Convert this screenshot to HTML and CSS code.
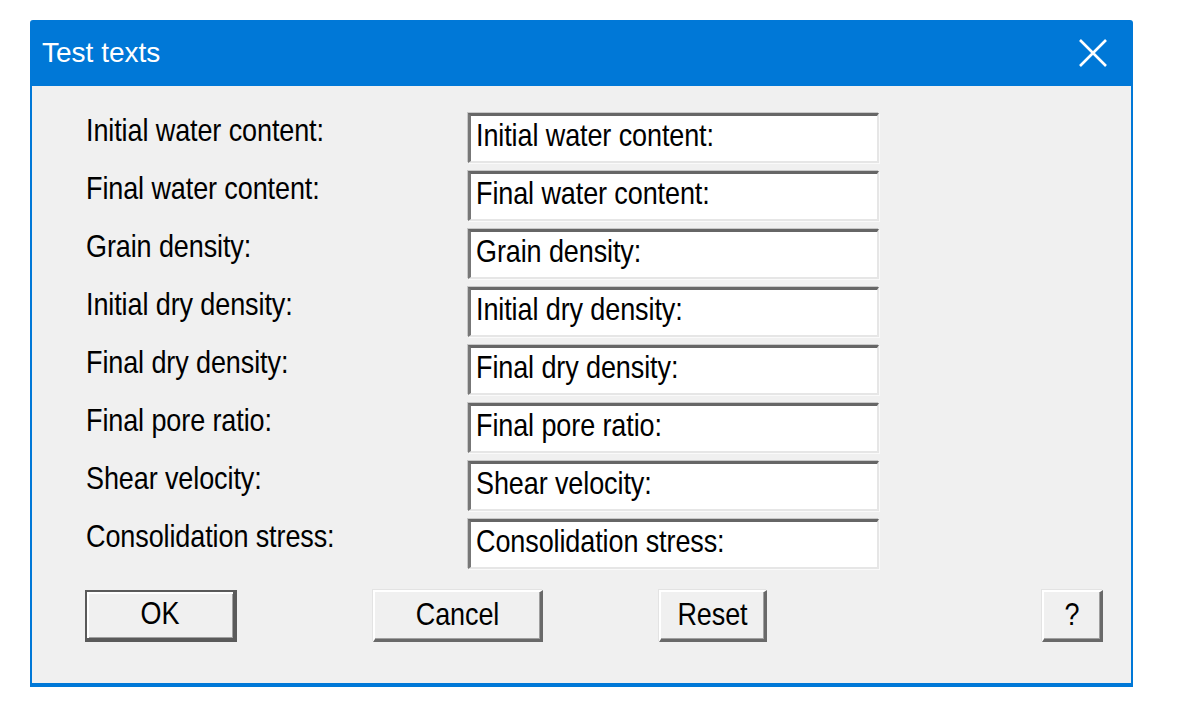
FILE: index.html
```html
<!DOCTYPE html>
<html>
<head>
<meta charset="utf-8">
<title>Test texts</title>
<link rel="stylesheet" href="styles.css">
</head>
<body>
<div class="window">
  <div class="titlebar">
    <span class="title">Test texts</span>
    <svg class="close" width="28" height="28" viewBox="0 0 28 28"><path d="M1 1 L27 27 M27 1 L1 27" stroke="#fff" stroke-width="2.6" fill="none"/></svg>
  </div>
  <div class="client">
    <div class="form">
      <div class="label"><span class="txt">Initial water content:</span></div><div class="field"><span class="txt">Initial water content:</span></div>
      <div class="label"><span class="txt">Final water content:</span></div><div class="field"><span class="txt">Final water content:</span></div>
      <div class="label"><span class="txt">Grain density:</span></div><div class="field"><span class="txt">Grain density:</span></div>
      <div class="label"><span class="txt">Initial dry density:</span></div><div class="field"><span class="txt">Initial dry density:</span></div>
      <div class="label"><span class="txt">Final dry density:</span></div><div class="field"><span class="txt">Final dry density:</span></div>
      <div class="label"><span class="txt">Final pore ratio:</span></div><div class="field"><span class="txt">Final pore ratio:</span></div>
      <div class="label"><span class="txt">Shear velocity:</span></div><div class="field"><span class="txt">Shear velocity:</span></div>
      <div class="label"><span class="txt">Consolidation stress:</span></div><div class="field"><span class="txt">Consolidation stress:</span></div>
    </div>
    <div class="buttons">
      <div class="btn btn-default btn-ok"><span class="txt">OK</span></div>
      <div class="btn btn-cancel"><span class="txt">Cancel</span></div>
      <div class="btn btn-reset"><span class="txt">Reset</span></div>
      <div class="btn btn-help"><span class="txt">?</span></div>
    </div>
  </div>
</div>
</body>
</html>
```
FILE: styles.css
```css
html, body {
  margin: 0;
  padding: 0;
  background: #ffffff;
}

body {
  font-family: "Liberation Sans", Arial, sans-serif;
}

.window {
  margin: 20px 0 0 30px;
  width: 1103px;
  height: 667px;
  box-sizing: border-box;
  background: #0078d7;
  padding: 0 2px 4px 2px;
  display: flex;
  flex-direction: column;
  border-top-left-radius: 3px;
  border-top-right-radius: 3px;
}

.titlebar {
  height: 66px;
  flex: none;
  display: flex;
  align-items: center;
  justify-content: space-between;
  padding: 0 24px 0 10px;
}

.title {
  color: #ffffff;
  font-size: 28px;
  line-height: 1;
}

.close {
  display: block;
}

.client {
  flex: 1;
  background: #f0f0f0;
  padding: 27px 0 0 53px;
  color: #000;
}

.txt {
  display: inline-block;
  transform: scaleY(1.17);
  transform-origin: 50% 50%;
  letter-spacing: -0.1px;
}

.form {
  display: grid;
  grid-template-columns: 382px 411px;
  grid-auto-rows: 50px;
  row-gap: 8px;
  padding-left: 1px;
}

.label {
  font-size: 27px;
  line-height: 31px;
  padding-top: 3px;
  white-space: nowrap;
}

.field {
  box-sizing: border-box;
  height: 50px;
  background: #ffffff;
  border-top: 3px solid #666666;
  border-left: 3px solid #777777;
  border-right: 2px solid #e6e6e6;
  border-bottom: 2px solid #e6e6e6;
  box-shadow: -1px -1px 0 #c8c8c8, 1px 1px 0 #fafafa;
  font-size: 27px;
  line-height: 31px;
  padding: 5px 0 0 5px;
  white-space: nowrap;
}

.buttons {
  display: flex;
  margin-top: 21px;
}

.btn {
  box-sizing: border-box;
  height: 52px;
  background: #f0f0f0;
  border-top: 2px solid #ffffff;
  border-left: 2px solid #ffffff;
  border-right: 3px solid #696969;
  border-bottom: 3px solid #696969;
  box-shadow: inset -1px -1px 0 #a0a0a0, -1px -1px 0 #e3e3e3;
  font-size: 27px;
  line-height: 31px;
  display: flex;
  align-items: center;
  justify-content: center;
  padding-bottom: 1px;
}

.btn-default {
  border: 2px solid #5a5a5a;
  border-right-width: 4px;
  border-bottom-width: 4px;
  box-shadow: inset 2px 2px 0 #ffffff, inset -1px -1px 0 #a0a0a0;
}

.btn-ok {
  width: 152px;
}

.btn-cancel {
  width: 170px;
  margin-left: 136px;
}

.btn-reset {
  width: 108px;
  margin-left: 116px;
}

.btn-help {
  width: 61px;
  margin-left: 275px;
}
```
